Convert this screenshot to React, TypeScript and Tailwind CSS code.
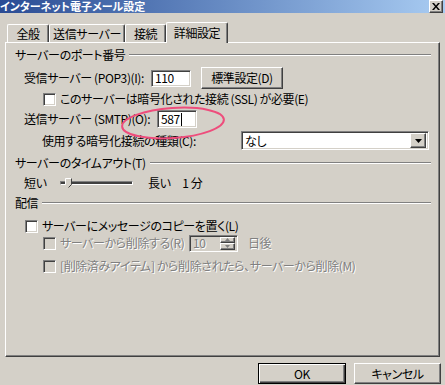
import React from "react";

const sunken =
  "border border-t-[#808080] border-l-[#808080] border-b-white border-r-white shadow-[inset_1px_1px_0_#404040,inset_-1px_-1px_0_#D4D0C8]";
const raised =
  "border border-t-white border-l-white border-r-[#404040] border-b-[#404040] shadow-[inset_-1px_-1px_0_#808080,inset_1px_1px_0_#D4D0C8]";
const disabledText = "text-[#808080] [text-shadow:1px_1px_0_#ffffff]";

function Check({ disabled }: { disabled?: boolean }) {
  return (
    <div
      className={`w-[13px] h-[13px] shrink-0 ${sunken} ${disabled ? "bg-[#D4D0C8]" : "bg-white"}`}
    />
  );
}

function Header({ label }: { label: string }) {
  return (
    <div className="flex items-center h-[16px] pl-[9px] pr-[8px]">
      <span className="whitespace-nowrap">{label}</span>
      <div className="flex-1 ml-[4px] h-[2px] border-t border-t-[#808080] border-b border-b-white" />
    </div>
  );
}

export default function App() {
  return (
    <div className="w-[445px] h-[385px] bg-[#D4D0C8] overflow-hidden relative text-black text-[12px] leading-[14px] tracking-[-0.4px] [font-family:'Noto_Sans_CJK_JP',sans-serif] [font-feature-settings:'palt']">
      {/* Title bar */}
      <div className="h-[13px] flex items-center bg-linear-to-r from-[#2B4C94] to-[#A9CCF2] overflow-hidden">
        <span className="text-white font-bold text-[11px] leading-[13px] whitespace-nowrap tracking-[0px]">
          インターネット電子メール設定
        </span>
        <div className="flex-1" />
        <div className={`w-[14px] h-[13px] -mt-[1px] mr-[2px] bg-[#D4D0C8] ${raised} flex items-center justify-center`}>
          <svg width="8" height="7" viewBox="0 0 8 7">
            <path d="M0 0h2l2 2.5L6 0h2L5 3.5 8 7H6L4 4.5 2 7H0l3-3.5z" fill="#000" />
          </svg>
        </div>
      </div>

      {/* Tabs */}
      <div className="mt-[9px] h-[20px] pl-[7px] flex items-end">
        {[
          { t: "全般", w: "w-[42px]" },
          { t: "送信サーバー", w: "w-[76px]" },
          { t: "接続", w: "w-[41px]" },
        ].map((tab) => (
          <div
            key={tab.t}
            className={`${tab.w} h-[18px] border-t border-l border-white border-r border-r-[#404040] shadow-[inset_-1px_0_0_#808080] rounded-t-[2px] flex items-start justify-center pt-[2px] whitespace-nowrap`}
          >
            {tab.t}
          </div>
        ))}
        <div className="w-[62px] h-[21px] -mb-[1px] relative z-10 bg-[#D4D0C8] border-t border-l border-white border-r border-r-[#404040] shadow-[inset_-1px_0_0_#808080] rounded-t-[2px] flex items-start justify-center pt-[3px] whitespace-nowrap">
          詳細設定
        </div>
      </div>

      {/* Panel */}
      <div className="ml-[5px] w-[435px] h-[315px] border-t border-l border-white border-r border-b border-r-[#404040] border-b-[#404040] shadow-[inset_-1px_-1px_0_#808080] flex flex-col">
        <div className="mt-[4px]">
          <Header label="サーバーのポート番号" />
        </div>

        {/* POP3 */}
        <div className="mt-[4px] h-[22px] flex items-center pl-[18px]">
          <span className="w-[127px] whitespace-nowrap">受信サーバー (POP3)(I):</span>
          <div className={`w-[40px] h-[17px] bg-white ${sunken} pl-[3px] flex items-center`}>110</div>
          <div className={`ml-[10px] w-[82px] h-[22px] ${raised} flex items-center justify-center whitespace-nowrap`}>
            標準設定(D)
          </div>
        </div>

        {/* SSL */}
        <div className="mt-[2px] h-[16px] flex items-center pl-[37px]">
          <Check />
          <span className="ml-[4px] whitespace-nowrap">このサーバーは暗号化された接続 (SSL) が必要(E)</span>
        </div>

        {/* SMTP */}
        <div className="mt-[3px] h-[18px] flex items-center pl-[18px]">
          <span className="w-[133px] whitespace-nowrap">送信サーバー (SMTP)(O):</span>
          <div className={`w-[40px] h-[18px] bg-white ${sunken} pl-[3px] flex items-center`}>
            587<span className="inline-block w-[1px] h-[13px] bg-black ml-[1px]" />
          </div>
        </div>

        {/* Encryption */}
        <div className="mt-[3px] h-[19px] flex items-center pl-[36px]">
          <span className="w-[199px] whitespace-nowrap">使用する暗号化接続の種類(C):</span>
          <div className={`w-[188px] h-[19px] bg-white ${sunken} flex items-center pl-[3px] pr-[2px]`}>
            <span className="flex-1">なし</span>
            <div className={`w-[16px] h-[15px] bg-[#D4D0C8] ${raised} flex items-center justify-center`}>
              <svg width="7" height="4" viewBox="0 0 7 4">
                <path d="M0 0h7L3.5 4z" fill="#000" />
              </svg>
            </div>
          </div>
        </div>

        <div className="mt-[5px]">
          <Header label="サーバーのタイムアウト(T)" />
        </div>

        {/* Slider */}
        <div className="mt-[4px] h-[16px] flex items-center pl-[18px]">
          <span className="w-[36px] whitespace-nowrap">短い</span>
          <div className="relative w-[73px] h-[16px] flex items-center">
            <div className="w-full h-[4px] border border-t-[#808080] border-l-[#808080] border-b-white border-r-white bg-[#404040]" />
            <svg className="absolute left-[5px] top-[3px]" width="7" height="10" viewBox="0 0 7 10">
              <path d="M0.5 0.5h6v6l-3 3-3-3z" fill="#D4D0C8" />
              <path d="M0.5 6.5v-6h6" fill="none" stroke="#fff" />
              <path d="M6.5 0.5v6l-3 3" fill="none" stroke="#404040" />
            </svg>
          </div>
          <span className="ml-[15px] whitespace-nowrap">長い　1 分</span>
        </div>

        <div className="mt-[4px]">
          <Header label="配信" />
        </div>

        {/* Leave copy */}
        <div className="mt-[7px] h-[16px] flex items-center pl-[19px]">
          <Check />
          <span className="ml-[4px] whitespace-nowrap">サーバーにメッセージのコピーを置く(L)</span>
        </div>

        {/* Remove after */}
        <div className="h-[18px] flex items-center pl-[37px]">
          <Check disabled />
          <span className={`ml-[4px] w-[129px] whitespace-nowrap ${disabledText}`}>サーバーから削除する(R)</span>
          <div className={`w-[49px] h-[17px] bg-[#D4D0C8] ${sunken} flex items-center pl-[3px] pr-[2px]`}>
            <span className={`flex-1 ${disabledText}`}>10</span>
            <div className="w-[15px] h-[13px] flex flex-col">
              <div className={`flex-1 ${raised} flex items-center justify-center`}>
                <svg width="5" height="3" viewBox="0 0 5 3">
                  <path d="M0 3h5L2.5 0z" fill="#808080" />
                </svg>
              </div>
              <div className={`flex-1 ${raised} flex items-center justify-center`}>
                <svg width="5" height="3" viewBox="0 0 5 3">
                  <path d="M0 0h5L2.5 3z" fill="#808080" />
                </svg>
              </div>
            </div>
          </div>
          <span className={`ml-[10px] whitespace-nowrap ${disabledText}`}>日後</span>
        </div>

        {/* Remove when deleted */}
        <div className="mt-[6px] h-[16px] flex items-center pl-[37px]">
          <Check disabled />
          <span className={`ml-[4px] whitespace-nowrap ${disabledText}`}>
            [削除済みアイテム] から削除されたら、サーバーから削除(M)
          </span>
        </div>
      </div>

      {/* Buttons */}
      <div className="mt-[6px] flex justify-end pr-[4px] gap-[8px]">
        <div className="w-[88px] h-[21px] border border-black shadow-[inset_1px_1px_0_#ffffff,inset_-1px_-1px_0_#404040,inset_-2px_-2px_0_#808080] flex items-center justify-center">
          OK
        </div>
        <div className={`w-[87px] h-[21px] ${raised} flex items-center justify-center`}>キャンセル</div>
      </div>

      {/* Red annotation ellipse */}
      <svg className="absolute left-[119px] top-[105px] pointer-events-none" width="110" height="38" viewBox="0 0 110 38">
        <ellipse cx="54" cy="18" rx="51" ry="15" transform="rotate(-4 54 18)" fill="none" stroke="#EE4D7C" strokeWidth="2" />
      </svg>
    </div>
  );
}
